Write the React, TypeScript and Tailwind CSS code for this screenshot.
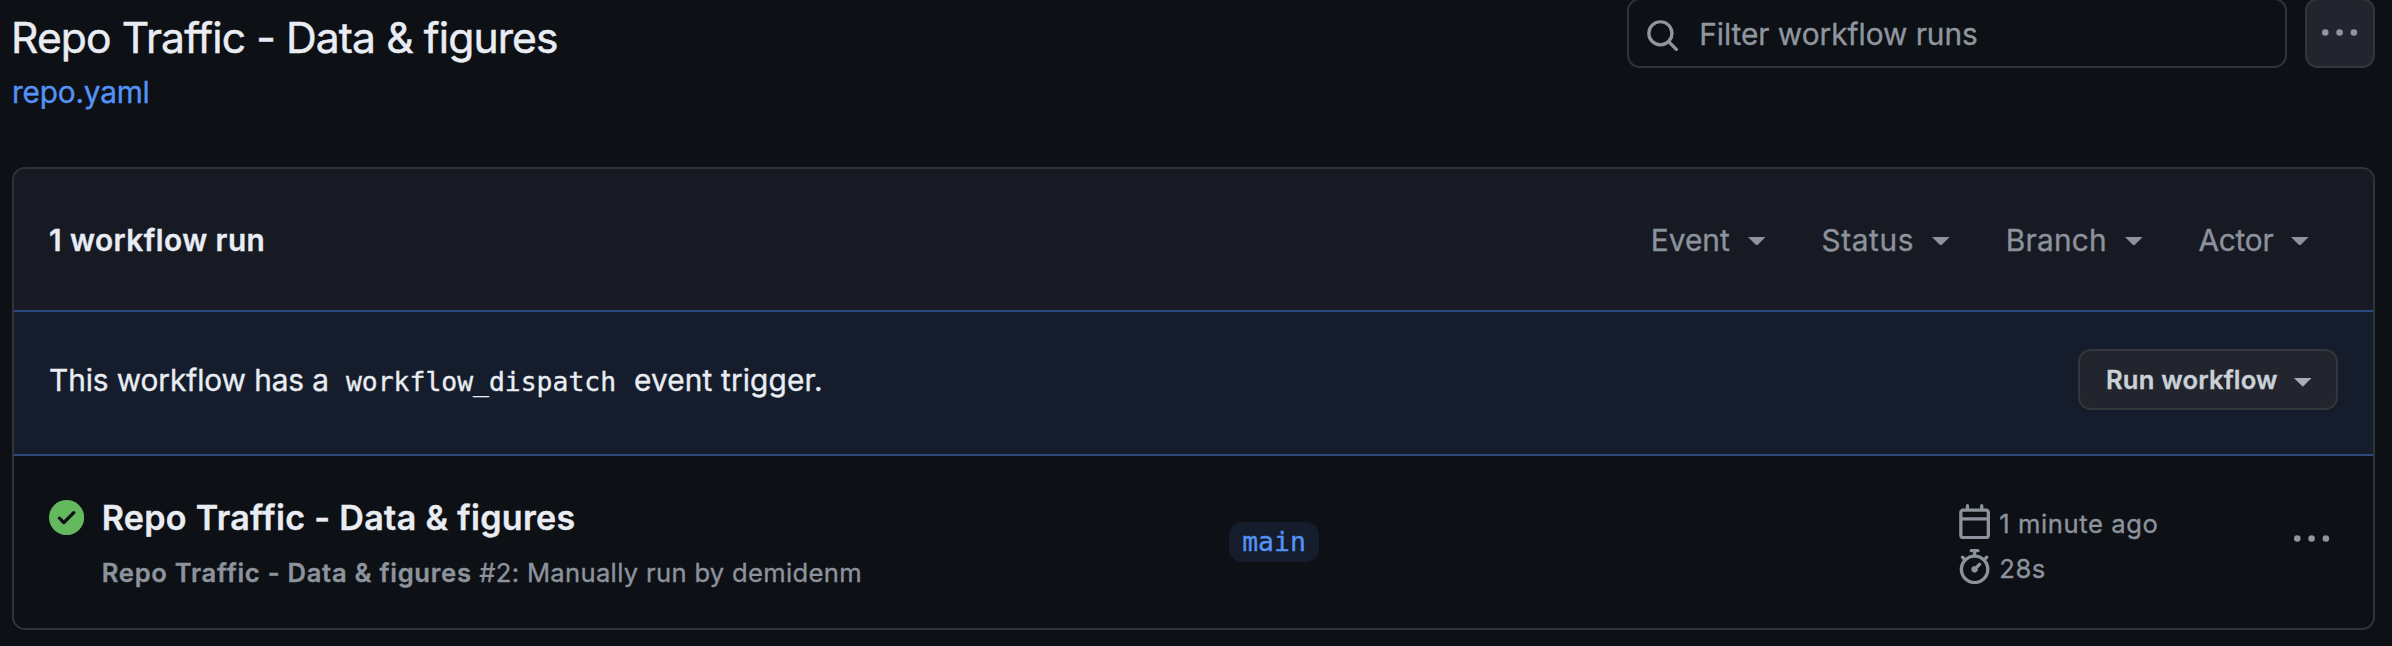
import React from "react";

const PATHS = {
  search:
    "M10.68 11.74a6 6 0 0 1-7.922-8.982 6 6 0 0 1 8.982 7.922l3.04 3.04a.749.749 0 0 1-.326 1.275.749.749 0 0 1-.734-.215ZM11.5 7a4.499 4.499 0 1 0-8.997 0A4.499 4.499 0 0 0 11.5 7Z",
  kebab:
    "M8 9a1.5 1.5 0 1 0 0-3 1.5 1.5 0 0 0 0 3ZM1.5 9a1.5 1.5 0 1 0 0-3 1.5 1.5 0 0 0 0 3Zm13 0a1.5 1.5 0 1 0 0-3 1.5 1.5 0 0 0 0 3Z",
  check:
    "M8 16A8 8 0 1 1 8 0a8 8 0 0 1 0 16Zm3.78-9.72a.751.751 0 0 0-.018-1.042.751.751 0 0 0-1.042-.018L6.75 9.19 5.28 7.72a.751.751 0 0 0-1.042.018.751.751 0 0 0-.018 1.042l2 2a.75.75 0 0 0 1.06 0Z",
  calendar:
    "M4.75 0a.75.75 0 0 1 .75.75V2h5V.75a.75.75 0 0 1 1.5 0V2h1.25c.966 0 1.75.784 1.75 1.75v10.5A1.75 1.75 0 0 1 13.25 16H2.75A1.75 1.75 0 0 1 1 14.25V3.75C1 2.784 1.784 2 2.75 2H4V.75A.75.75 0 0 1 4.75 0ZM2.5 7.5v6.75c0 .138.112.25.25.25h10.5a.25.25 0 0 0 .25-.25V7.5Zm10.75-4H2.75a.25.25 0 0 0-.25.25V6h11V3.75a.25.25 0 0 0-.25-.25Z",
  stopwatch:
    "M5.75.75A.75.75 0 0 1 6.5 0h3a.75.75 0 0 1 0 1.5h-.75v1l-.001.041a6.724 6.724 0 0 1 3.464 1.435l.007-.006.75-.75a.749.749 0 0 1 1.275.326.749.749 0 0 1-.215.734l-.75.75-.006.007a6.75 6.75 0 1 1-10.548 0L2.72 5.03l-.75-.75a.751.751 0 0 1 .018-1.042.751.751 0 0 1 1.042-.018l.75.75.007.006A6.72 6.72 0 0 1 7.25 2.541V1.5H6.5a.75.75 0 0 1-.75-.75ZM8 14.5a5.25 5.25 0 1 0 0-10.5 5.25 5.25 0 0 0 0 10.5Zm.389-6.7 1.33-1.33a.75.75 0 1 1 1.061 1.06L9.45 8.861A1.503 1.503 0 0 1 8 10.75a1.499 1.499 0 1 1 .389-2.95Z",
};

function Icon({ name, className = "" }: { name: keyof typeof PATHS; className?: string }) {
  return (
    <svg viewBox="0 0 16 16" fill="currentColor" className={`size-[35.2px] shrink-0 ${className}`} aria-hidden="true">
      <path d={PATHS[name]} />
    </svg>
  );
}

function Caret({ className = "" }: { className?: string }) {
  return (
    <svg viewBox="0 0 8 4" fill="currentColor" className={`h-[8.8px] w-[17.6px] shrink-0 ${className}`} aria-hidden="true">
      <path d="M0 0h8L4 4Z" />
    </svg>
  );
}

const FILTERS = [
  { label: "Event", tracking: "tracking-[0.05px]" },
  { label: "Status", tracking: "tracking-[0.65px]" },
  { label: "Branch", tracking: "tracking-[0.25px]" },
  { label: "Actor", tracking: "tracking-[-0.25px]" },
];

function PageHeader() {
  return (
    <header className="flex h-[167px] items-start justify-between pr-[17px] pl-[11px]">
      <div className="pt-[10px]">
        <h1 className="text-[42.6px] leading-[55px] tracking-[-0.89px] whitespace-nowrap text-[#e9edf3] [-webkit-text-stroke:0.5px]">
          Repo Traffic - Data &amp; figures
        </h1>
        <a href="#" className="mt-[5px] ml-px block text-[29.8px] leading-[44px] tracking-[-0.2px] text-[#5493f5]">
          repo.yaml
        </a>
      </div>
      <div className="-mt-[2px] flex gap-[18px] text-[#8f969f]">
        <div className="flex h-[70px] w-[660px] items-center rounded-[13px] border-2 border-[#303338] pl-[16px]">
          <Icon name="search" className="mt-[5px]" />
          <span className="mt-[2px] ml-[19px] text-[29.8px] tracking-[-0.03px]">Filter workflow runs</span>
        </div>
        <button className="flex h-[70px] w-[70px] items-center justify-center rounded-[13px] border-2 border-[#34363b] bg-[#22252d]">
          <Icon name="kebab" className="mt-px" />
        </button>
      </div>
    </header>
  );
}

function Toolbar() {
  return (
    <div className="flex h-[141px] items-center justify-between bg-[#171a22] pr-[64px] pl-[35px] text-[29.8px]">
      <strong className="mt-px font-semibold tracking-[0.45px] text-[#e8ecf4]">1 workflow run</strong>
      <div className="mt-px flex gap-[56px] text-[#8c939c]">
        {FILTERS.map(({ label, tracking }) => (
          <button key={label} className="flex items-center gap-[18px]">
            <span className={tracking}>{label}</span>
            <Caret className="mt-[2px]" />
          </button>
        ))}
      </div>
    </div>
  );
}

function DispatchBanner() {
  return (
    <div className="flex h-[146px] items-center justify-between border-y-2 border-[#2b4a80] bg-[#151d2c] pr-[35px] pb-[7px] pl-[35px]">
      <p className="mt-px flex items-baseline text-[29.8px] whitespace-nowrap text-[#e9edf3]">
        <span className="tracking-[-0.08px]">This workflow has a</span>
        <code className="mr-[18px] ml-[17px] font-['DejaVu_Sans_Mono',monospace] text-[26.4px] leading-none">
          workflow_dispatch
        </code>
        <span className="tracking-[0.15px]">event trigger.</span>
      </p>
      <button className="flex h-[61px] w-[260px] items-center rounded-[13px] border-2 border-[#33373b] bg-[#22252d] pl-[26px] text-[25.6px] font-semibold tracking-[0.17px] whitespace-nowrap text-[#cbd1d9]">
        <span className="mt-px">Run workflow</span>
        <Caret className="mt-[6px] ml-[16px] text-[#a9aeb6]" />
      </button>
    </div>
  );
}

function RunRow() {
  return (
    <div className="flex h-[172px] items-start pr-[41px] pl-[35px]">
      <div className="flex w-[1180px] items-start gap-[17.5px] pt-[39px]">
        <Icon name="check" className="mt-[4.5px] text-[#64b85d]" />
        <div className="whitespace-nowrap">
          <div className="pt-px text-[34.1px] leading-[44px] font-semibold tracking-[0.31px] text-[#e9edf3]">
            Repo Traffic - Data &amp; figures
          </div>
          <div className="mt-[15px] text-[25.6px] leading-[36px] tracking-[0.32px] text-[#8c939c]">
            <span className="font-semibold tracking-[0.72px]">Repo Traffic - Data &amp; figures</span> #2: Manually run by
            demidenm
          </div>
        </div>
      </div>
      <a
        href="#"
        className="mt-[66px] flex h-[40px] w-[90px] items-center justify-center rounded-[13px] bg-[#151d2c] font-['DejaVu_Sans_Mono',monospace] text-[26.4px] leading-none text-[#5493f5]"
      >
        main
      </a>
      <div className="mt-[48px] ml-[638px] text-[25.6px] leading-[35px] tracking-[0.6px] text-[#8c939c]">
        <div className="flex h-[35px] gap-[7px]">
          <Icon name="calendar" />
          <span className="pt-[2px]">1 minute ago</span>
        </div>
        <div className="mt-[10px] flex h-[35px] gap-[7px]">
          <Icon name="stopwatch" />
          <span className="pt-[2px]">28s</span>
        </div>
      </div>
      <button className="mt-[66px] ml-auto flex text-[#8f969f]">
        <Icon name="kebab" className="mr-[3px]" />
      </button>
    </div>
  );
}

export default function App() {
  return (
    <main className="h-[646px] w-full overflow-hidden bg-[#0d1015] font-['Inter',sans-serif] [-webkit-text-stroke:0.35px]">
      <PageHeader />
      <section className="mr-[17px] ml-[12px] h-[463px] overflow-hidden rounded-[13px] border-2 border-[#303338]">
        <Toolbar />
        <DispatchBanner />
        <RunRow />
      </section>
    </main>
  );
}
